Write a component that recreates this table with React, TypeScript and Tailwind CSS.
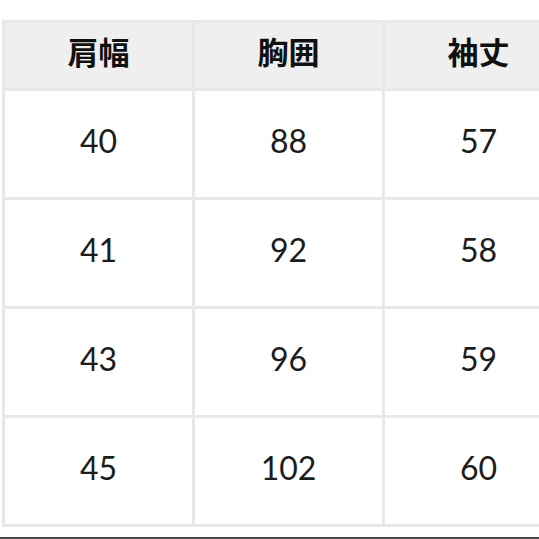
const headers = ["肩幅", "胸囲", "袖丈"]

const rows = [
  ["40", "88", "57"],
  ["41", "92", "58"],
  ["43", "96", "59"],
  ["45", "102", "60"],
]

export default function App() {
  return (
    <div className="flex h-[539px] w-[539px] flex-col overflow-hidden bg-white">
      <div className="pl-[2px] pt-[20px]">
        <div className="grid w-[570px] grid-cols-[187px_187px_187px] gap-[3px] bg-[#e8e8e8] p-[3px]">
          {headers.map((h) => (
            <div
              key={h}
              className="flex h-[65px] items-center justify-center bg-[#efefef] pb-[9px] text-[31px] font-bold text-[#111] [font-family:'Noto_Sans_CJK_JP',sans-serif]"
            >
              {h}
            </div>
          ))}
          {rows.map((row, i) =>
            row.map((v, j) => (
              <div
                key={`${i}-${j}`}
                className="flex h-[106px] items-center justify-center bg-white pb-[6px] text-[32px] text-[#1c1c1c] [font-family:Lato,sans-serif]"
              >
                {v}
              </div>
            ))
          )}
        </div>
      </div>
      <div className="mt-auto h-[2px] bg-[#4a4a4a]" />
    </div>
  )
}
